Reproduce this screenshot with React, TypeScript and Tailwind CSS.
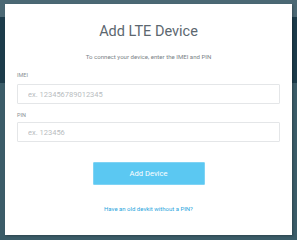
import React from 'react';

const App: React.FC = () => {
  return (
    <div className="relative w-[297px] h-[240px] overflow-hidden" style={{ fontFamily: 'Roboto, "Liberation Sans", sans-serif' }}>
      {/* dimmed page behind the modal */}
      <div className="flex flex-col h-full">
        <div className="h-[17px] bg-[#4b6874]" />
        <div className="h-[66px] bg-[#1c3b4a]" />
        <div className="flex-1 bg-[#3b5c68]" />
      </div>

      {/* Modal */}
      <div className="absolute left-[5px] top-[4px] w-[287px] h-[231px] bg-white shadow-[1px_1px_2px_rgba(0,0,0,0.25)] px-[12px] flex flex-col">
        <h1 className="mt-[20px] text-center text-[14.5px] leading-[16px] font-normal text-[#5c676f]">Add LTE Device</h1>
        <p className="mt-[13px] text-center text-[6.1px] leading-[8px] text-[#7b8387]">
          To connect your device, enter the IMEI and PIN
        </p>

        <label className="mt-[10px] text-[5.5px] leading-[8px] text-[#8a9094]">IMEI</label>
        <input
          className="mt-[5px] h-[20px] w-full border border-[#e4e6e8] rounded-[1px] px-[10px] text-[7.5px] outline-none placeholder:text-[#b9bdc0]"
          placeholder="ex. 123456789012345"
        />

        <label className="mt-[7px] text-[5.5px] leading-[8px] text-[#8a9094]">PIN</label>
        <input
          className="mt-[3px] h-[20px] w-full border border-[#e4e6e8] rounded-[1px] px-[10px] text-[7.5px] outline-none placeholder:text-[#b9bdc0]"
          placeholder="ex. 123456"
        />

        <div className="flex justify-center mt-[20px]">
          <button className="w-[112px] h-[23px] bg-[#5bc8f2] border border-[#7fd3f4] rounded-[1px] text-white text-[7.6px]">
            Add Device
          </button>
        </div>

        <a className="mt-[20px] text-center text-[6px] leading-[8px] text-[#2aa5dd]">Have an old devkit without a PIN?</a>
      </div>
    </div>
  );
};

export default App;
